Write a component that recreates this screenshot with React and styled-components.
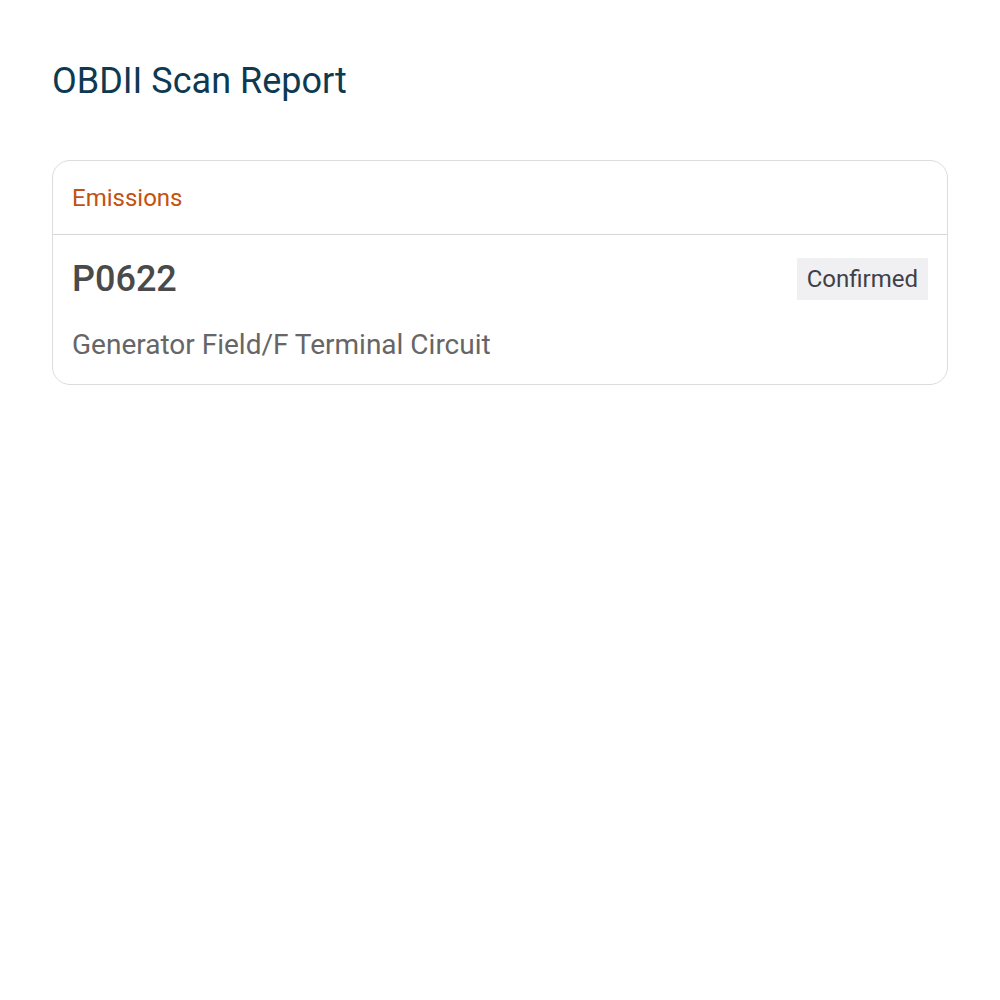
import React from "react";
import styled, { createGlobalStyle } from "styled-components";

const GlobalStyle = createGlobalStyle`
  html, body {
    margin: 0;
    padding: 0;
    background: #ffffff;
    font-family: Roboto, "Noto Sans", Arial, sans-serif;
  }
`;

const Page = styled.main`
  padding: 52px 52px;
  box-sizing: border-box;
  width: 1000px;
`;

const Title = styled.h1`
  margin: 7px 0 0;
  font-size: 36px;
  font-weight: 400;
  line-height: 44px;
  color: #0d3a52;
`;

const Card = styled.section`
  margin-top: 57px;
  border: 1px solid #dcdcdc;
  border-radius: 18px;
  overflow: hidden;
`;

const CardHeader = styled.header`
  height: 73px;
  display: flex;
  align-items: center;
  padding: 0 19px;
  border-bottom: 1px solid #d6d6d6;
  font-size: 24px;
  color: #c4510f;
`;

const CodeRow = styled.div`
  padding: 23px 19px 22px 19px;
`;

const CodeLine = styled.div`
  display: flex;
  align-items: center;
  justify-content: space-between;
`;

const Code = styled.div`
  font-size: 36px;
  font-weight: 500;
  color: #4a4a4a;
`;

const Badge = styled.span`
  background: #f0f0f2;
  color: #404048;
  font-size: 24px;
  padding: 0 10px;
  height: 42px;
  display: inline-flex;
  align-items: center;
`;

const Description = styled.p`
  margin: 28px 0 0;
  font-size: 28px;
  line-height: 34px;
  color: #666666;
`;

export default function App() {
  return (
    <>
      <GlobalStyle />
      <Page>
        <Title>OBDII Scan Report</Title>
        <Card>
          <CardHeader>Emissions</CardHeader>
          <CodeRow>
            <CodeLine>
              <Code>P0622</Code>
              <Badge>Confirmed</Badge>
            </CodeLine>
            <Description>Generator Field/F Terminal Circuit</Description>
          </CodeRow>
        </Card>
      </Page>
    </>
  );
}
